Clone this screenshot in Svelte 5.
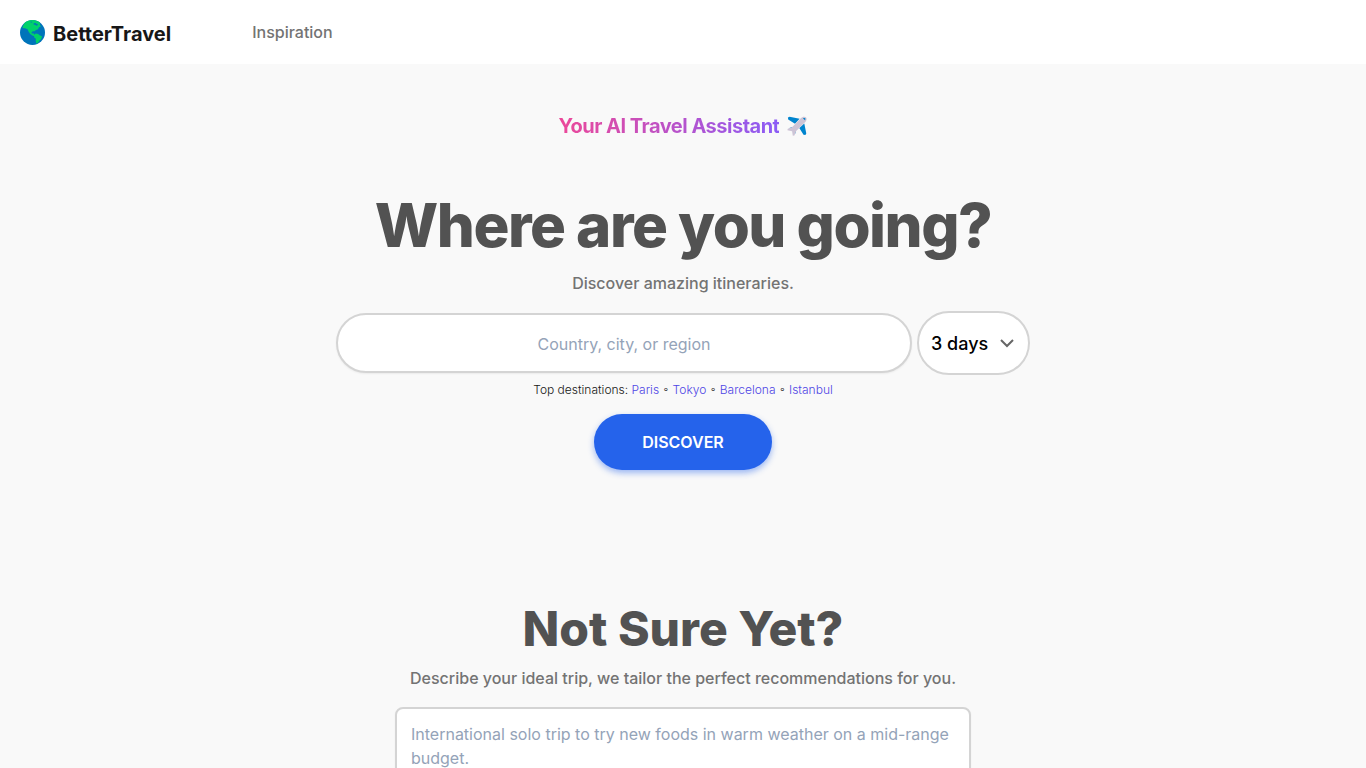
<script>
  const destinations = ['Paris', 'Tokyo', 'Barcelona', 'Istanbul'];
  const lengths = Array.from({ length: 7 }, (_, i) => i + 1);
  let place = $state('');
  let days = $state(3);
  let idea = $state('');
</script>

<header>
  <a class="brand" href="/">
    <svg class="globe" viewBox="0 0 24 24" aria-hidden="true">
      <circle cx="12" cy="12" r="12" fill="#0074ba" />
      <path fill="#00d26a" d="M4.600 2.600C6.700 1 9.200 0 12 0c2.700 0 5.200.9 7.200 2.400l-.2 1.900 1 1.900-1.800.7-.9 1.900-2 .8-1.300 1.300-1.600-.2-1.300 1 .2 1.300 1.600-.2.9 1.300 1.500.5-.9 1-2.200-.6-2.400-1.500-1.600-2.500-.9-2.200-2.500-.8-2.500-.3A12 12 0 0 1 4.600 2.600Z" />
      <path fill="#00d26a" d="m13.600 14.200 1.500-1.300 2.400.5 1.200 1.300 2.400 1-.7 2.500-1.600 1.500-1.200 2-1.900 1.200-.6-2.700.1-2.200-1.700-1.500Z" />
      <path fill="#0074ba" d="m13 3.300 1.600-.6.9.8 1.500.3v1.300l-1.500.5-.9-1-1.600-.2ZM10 1.500l1.500.2.3.8-1.500-.2Z" />
    </svg>
    <span>BetterTravel</span>
  </a>
  <nav><a href="/inspiration">Inspiration</a></nav>
</header>

<main>
  <p class="tagline">
    <span>Your AI Travel Assistant</span>
    <svg viewBox="0 0 20 20" aria-hidden="true">
      <path fill="#0084ce" d="M.9 1.600 2.600.7l10 2-4.600 5L1.200 3.500ZM17.300 7.500l2 9.900-.9 1.700-1.900-.3-4.200-6.800ZM2.300 11.900l3.400-1-1.900 2.900ZM9 14.200l-.8 3.500-2-1.700Z" />
      <path fill="#cdc4d6" d="M13.500 2.400C15.200.7 17.600 0 18.900 1.300s.6 3.500-1.100 5.200L9.200 14.900l-1.800 4.600-1.600.3-.7-4.600-4.700-.9.400-1.500 4.200-1.500Z" />
      <path fill="#0084ce" d="M16 2.400c.8-.6 1.600-.6 2.100-.1.400.4.400 1.200-.1 1.900Z" />
    </svg>
  </p>

  <h1>Where are you going?</h1>
  <p class="lead">Discover amazing itineraries.</p>

  <form onsubmit={(e) => e.preventDefault()}>
    <div class="search">
      <input type="text" aria-label="Destination" placeholder="Country, city, or region" bind:value={place} />
      <div class="duration">
        <select aria-label="Trip length" bind:value={days}>
          {#each lengths as n}
            <option value={n}>{n} {n === 1 ? 'day' : 'days'}</option>
          {/each}
        </select>
        <svg viewBox="0 0 16 16" aria-hidden="true"><path d="m2 5 6 6 6-6" /></svg>
      </div>
    </div>
    <p class="top">
      Top destinations:
      {#each destinations as name, i}{#if i}{' ◦ '}{/if}<a href="#{name}">{name}</a>{/each}
    </p>
    <button type="submit">DISCOVER</button>
  </form>

  <section>
    <h2>Not Sure Yet?</h2>
    <p class="lead">Describe your ideal trip, we tailor the perfect recommendations for you.</p>
    <textarea aria-label="Ideal trip" rows="4" bind:value={idea} placeholder="International solo trip to try new foods in warm weather on a mid-range budget."></textarea>
  </section>
</main>

<style>
  :global(body) {
    margin: 0;
    background: #f9f9f9;
    color: #171717;
    font-family: Inter, sans-serif;
    font-size: 16px;
    line-height: 24px;
  }
  :global(html) { scrollbar-width: none; }
  h1, h2, p { margin: 0; }
  a { text-decoration: none; }
  header {
    display: flex;
    align-items: center;
    gap: 81px;
    height: 64px;
    padding: 0 20px;
    background: #fff;
  }
  .brand {
    display: flex;
    align-items: center;
    gap: 8px;
    color: #171717;
    font-size: 20px;
    font-weight: 700;
    line-height: 28px;
    padding-top: 4px;
  }
  .globe { width: 25px; height: 25px; margin-top: -4px; }
  nav a { color: #737373; font-weight: 500; }
  main {
    display: flex;
    flex-direction: column;
    align-items: center;
    padding: 48px 20px 64px;
    text-align: center;
  }
  .tagline {
    display: flex;
    align-items: center;
    gap: 8px;
    font-size: 20px;
    font-weight: 700;
    line-height: 28px;
    letter-spacing: -0.025em;
  }
  .tagline span {
    background: linear-gradient(to right, #ec4899, #8b5cf6);
    background-clip: text;
    color: transparent;
  }
  .tagline svg { width: 20px; height: 20px; }
  h1 {
    margin-top: 49px;
    color: #525252;
    font-size: 60px;
    font-weight: 800;
    line-height: 72px;
    letter-spacing: -0.025em;
  }
  .lead { margin-top: 13px; color: #737373; font-weight: 500; }
  h1 + .lead { margin-top: 10px; }
  form {
    display: flex;
    flex-direction: column;
    align-items: center;
    width: 100%;
    margin-top: 16px;
  }
  .search {
    display: flex;
    align-items: center;
    justify-content: center;
    gap: 5px;
    width: 100%;
  }
  input, select, textarea, button { box-sizing: border-box; font-family: inherit; }
  input, textarea {
    width: 100%;
    max-width: 576px;
    border: 2px solid #d4d4d4;
    background: #fff;
    font-size: 16px;
    line-height: 24px;
    box-shadow: 0 1px 2px rgb(0 0 0 / 6%);
  }
  input {
    height: 60px;
    padding: 2px 12px 0;
    border-radius: 30px;
    text-align: center;
  }
  input::placeholder, textarea::placeholder { color: #94a3b8; opacity: 1; }
  .duration { display: grid; align-items: center; flex: none; }
  .duration > * { grid-area: 1 / 1; }
  select {
    width: 113px;
    height: 64px;
    padding: 0 12px;
    appearance: none;
    border: 2px solid #d4d4d4;
    border-radius: 32px;
    background: #fff;
    color: #000;
    font-size: 18px;
    font-weight: 500;
  }
  .duration svg {
    justify-self: end;
    width: 16px;
    height: 16px;
    margin-right: 15px;
    fill: none;
    stroke: #666;
    stroke-width: 2;
    pointer-events: none;
  }
  .top { margin-top: 7px; font-size: 12px; font-weight: 300; line-height: 16px; }
  .top a { color: #4f46e5; }
  button {
    margin-top: 16px;
    padding: 16px 48px;
    border: 0;
    border-radius: 28px;
    background: #2563eb;
    color: #fff;
    font-size: 16px;
    font-weight: 600;
    line-height: 24px;
    box-shadow: 0 3px 6px rgb(37 99 235 / 45%);
  }
  section {
    display: flex;
    flex-direction: column;
    align-items: center;
    width: 100%;
    margin-top: 135px;
  }
  h2 { color: #525252; font-size: 48px; font-weight: 800; line-height: 48px; }
  textarea {
    margin-top: 17px;
    padding: 13px 14px;
    border-radius: 8px;
    resize: none;
  }
</style>
